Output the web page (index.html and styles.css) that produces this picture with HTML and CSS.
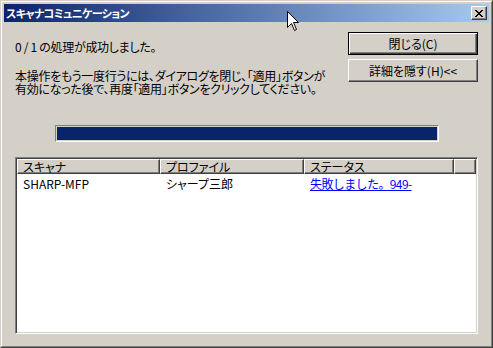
FILE: index.html
```html
<!DOCTYPE html>
<html>
<head>
    <title>スキャナコミュニケーション</title>
    <link rel="stylesheet" href="styles.css">
</head>
<body>
    <div class="window">
        <div class="frame">
            <div class="titlebar">
                <span class="title">スキャナコミュニケーション</span>
                <button class="close">
                    <svg width="8" height="7" viewBox="0 0 8 7">
                        <path d="M0 0h2v1h-2z M6 0h2v1h-2z M1 1h2v1h-2z M5 1h2v1h-2z M2 2h4v1h-4z M3 3h2v1h-2z M2 4h4v1h-4z M1 5h2v1h-2z M5 5h2v1h-2z M0 6h2v1h-2z M6 6h2v1h-2z" fill="#000"/>
                    </svg>
                </button>
            </div>
            <div class="client">
                <div class="top">
                    <div class="message">
                        <p>0 / 1 の処理が成功しました。</p>
                        <p>本操作をもう一度行うには、ダイアログを閉じ、「適用」ボタンが<br>有効になった後で、再度「適用」ボタンをクリックしてください。</p>
                    </div>
                    <div class="actions">
                        <button class="btn default">閉じる(C)</button>
                        <button class="btn">詳細を隠す(H)&lt;&lt;</button>
                    </div>
                </div>
                <div class="progress"><div class="progress-fill"></div></div>
                <div class="list">
                    <div class="list-head">
                        <div class="col">スキャナ</div>
                        <div class="col">プロファイル</div>
                        <div class="col">ステータス</div>
                        <div class="col"></div>
                    </div>
                    <div class="list-row">
                        <div class="cell">SHARP-MFP</div>
                        <div class="cell">シャープ三郎</div>
                        <div class="cell"><a href="#" class="status-link">失敗しました。949-</a></div>
                    </div>
                </div>
            </div>
        </div>
        <svg class="cursor" width="13" height="21" viewBox="0 0 13 21">
            <path d="M0.5 0.5 L0.5 16.5 L4.5 12.5 L7.5 19.5 L9.5 18.5 L6.5 11.5 L11.5 11.5 Z" fill="#fff" stroke="#000" stroke-width="1"/>
        </svg>
    </div>
</body>
</html>
```

FILE: styles.css
```css
body {
    margin: 0;
    background: #d4d0c8;
    font-family: "Noto Sans CJK JP", "Liberation Sans", sans-serif;
    font-size: 12px;
    font-feature-settings: "palt";
    color: #000;
}

.window {
    position: relative;
    width: 493px;
    height: 348px;
    box-sizing: border-box;
    border: 1px solid;
    border-color: #d4d0c8 #404040 #404040 #d4d0c8;
    background: #d4d0c8;
}

.frame {
    height: 100%;
    box-sizing: border-box;
    border: 1px solid;
    border-color: #fff #808080 #808080 #fff;
    padding: 2px;
    display: flex;
    flex-direction: column;
}

.titlebar {
    height: 18px;
    display: flex;
    align-items: center;
    justify-content: space-between;
    padding: 0 2px 0 2px;
    background: linear-gradient(to right, #0a246a, #a6caf0);
}

.title {
    color: #fff;
    font-weight: bold;
    font-size: 11px;
    letter-spacing: -0.6px;
    line-height: 18px;
}

.close {
    width: 16px;
    height: 14px;
    padding: 0;
    margin: 0;
    display: flex;
    align-items: center;
    justify-content: center;
    background: #d4d0c8;
    border: 1px solid;
    border-color: #fff #404040 #404040 #fff;
    box-shadow: inset -1px -1px #808080;
}

.client {
    flex: 1;
    display: flex;
    flex-direction: column;
    padding: 10px 11px 10px 11px;
}

.top {
    display: flex;
    justify-content: space-between;
}

.message {
    padding: 8px 0 0 0;
    letter-spacing: -0.3px;
}

.message p {
    margin: 0 0 16px 0;
    line-height: 13px;
}

.actions {
    display: flex;
    flex-direction: column;
    gap: 4px;
}

.btn {
    width: 130px;
    height: 23px;
    padding: 0;
    font-family: inherit;
    font-size: 12px;
    font-feature-settings: "palt";
    color: #000;
    background: #d4d0c8;
    border: 1px solid;
    border-color: #fff #404040 #404040 #fff;
    box-shadow: inset -1px -1px #808080;
}

.btn.default {
    border: 1px solid #000;
    box-shadow: inset 1px 1px #fff, inset -1px -1px #404040, inset -2px -2px #808080;
}

.progress {
    align-self: center;
    width: 384px;
    height: 17px;
    box-sizing: border-box;
    margin-top: 14px;
    padding: 1px;
    border: 1px solid;
    border-color: #808080 #fff #fff #808080;
}

.progress-fill {
    height: 100%;
    background: #0a246a;
}

.list {
    flex: 1;
    margin-top: 15px;
    border: 1px solid;
    border-color: #808080 #fff #fff #808080;
    box-shadow: inset 1px 1px #404040, inset -1px -1px #d4d0c8;
    padding: 1px;
    background: #fff;
}

.list-head {
    display: grid;
    grid-template-columns: 143px 144px 150px 1fr;
    height: 15px;
}

.col {
    box-sizing: border-box;
    padding-left: 5px;
    line-height: 13px;
    background: #d4d0c8;
    border: 1px solid;
    border-color: #fff #404040 #404040 #fff;
    box-shadow: inset -1px -1px #808080;
    overflow: hidden;
    white-space: nowrap;
}

.list-row {
    display: grid;
    grid-template-columns: 143px 144px 150px;
    margin-top: 2px;
    line-height: 16px;
}

.cell {
    padding-left: 6px;
    white-space: nowrap;
}

.status-link {
    color: #0000ff;
    text-decoration: underline;
    font-feature-settings: normal;
    letter-spacing: -0.6px;
}

.cursor {
    position: absolute;
    left: 286px;
    top: 10px;
}
```
